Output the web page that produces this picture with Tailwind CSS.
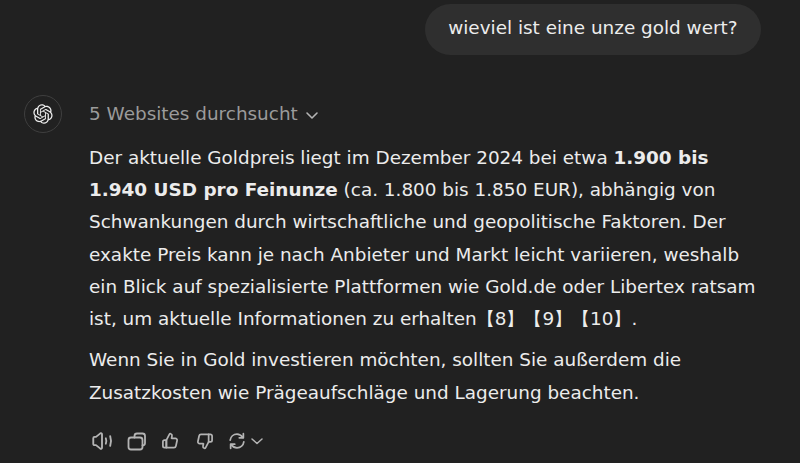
<!DOCTYPE html>
<html lang="de">
<head>
    <meta charset="UTF-8">
    <title>ChatGPT</title>
    <script src="https://cdn.jsdelivr.net/npm/@tailwindcss/browser@4"></script>
</head>
<body class="h-[463px] w-[800px] overflow-hidden bg-[#212121] font-['DejaVu_Sans',sans-serif] text-[18.4px] leading-[32.2px] text-[#ececec]">
    <div class="flex justify-end pt-[4px] pr-[39px]">
        <div class="h-[51px] rounded-[26px] bg-[#2f2f2f] px-[23.5px] py-[8px]">wieviel ist eine unze gold wert?</div>
    </div>
    <div class="mt-[40px] flex pl-[24px]">
        <div class="flex h-[38px] w-[38px] shrink-0 items-center justify-center rounded-full border border-[#3f3f3f]">
            <svg class="h-[20px] w-[20px]" viewBox="0 0 41 41" fill="#ececec"><path d="M37.5324 16.8707C37.9808 15.5241 38.1363 14.0974 37.9886 12.6859C37.8409 11.2744 37.3934 9.91076 36.676 8.68622C35.6126 6.83404 33.9882 5.36761 32.0373 4.4985C30.0864 3.62939 27.9098 3.40259 25.8215 3.85078C24.8796 2.7893 23.7219 1.94125 22.4257 1.36341C21.1295 0.785575 19.7249 0.491269 18.3058 0.500197C16.1708 0.495044 14.0893 1.16803 12.3614 2.42214C10.6335 3.67624 9.34853 5.44666 8.6917 7.47815C7.30085 7.76286 5.98686 8.3414 4.8377 9.17505C3.68854 10.0087 2.73073 11.0782 2.02839 12.312C0.956464 14.1591 0.498905 16.2988 0.721698 18.4228C0.944492 20.5467 1.83612 22.5449 3.268 24.1293C2.81966 25.4759 2.66413 26.9026 2.81182 28.3141C2.95951 29.7256 3.40701 31.0892 4.12437 32.3138C5.18791 34.1659 6.8123 35.6322 8.76321 36.5013C10.7141 37.3704 12.8907 37.5973 14.9789 37.1492C15.9208 38.2107 17.0786 39.0587 18.3747 39.6366C19.6709 40.2144 21.0755 40.5087 22.4946 40.4998C24.6307 40.5054 26.7133 39.8321 28.4418 38.5772C30.1704 37.3223 31.4556 35.5506 32.1119 33.5179C33.5027 33.2332 34.8167 32.6547 35.9659 31.821C37.115 30.9874 38.0728 29.9178 38.7752 28.684C39.8458 26.8371 40.3023 24.6979 40.0789 22.5748C39.8556 20.4517 38.9639 18.4544 37.5324 16.8707ZM22.4978 37.8849C20.7443 37.8874 19.0459 37.2733 17.6994 36.1501C17.7601 36.117 17.8666 36.0586 17.936 36.0161L25.9004 31.4156C26.1003 31.3019 26.2663 31.137 26.3813 30.9378C26.4964 30.7386 26.5563 30.5124 26.5549 30.2825V19.0542L29.9213 20.998C29.9389 21.0068 29.9541 21.0198 29.9656 21.0359C29.977 21.052 29.9842 21.0707 29.9867 21.0902V30.3889C29.9842 32.375 29.1946 34.2791 27.7909 35.6841C26.3872 37.0892 24.4838 37.8806 22.4978 37.8849ZM6.39227 31.0064C5.51397 29.4888 5.19742 27.7107 5.49804 25.9832C5.55718 26.0187 5.66048 26.0818 5.73461 26.1244L13.699 30.7248C13.8975 30.8408 14.1233 30.902 14.3532 30.902C14.583 30.902 14.8088 30.8408 15.0073 30.7248L24.731 25.1103V28.9979C24.7321 29.0177 24.7283 29.0376 24.7199 29.0556C24.7115 29.0736 24.6988 29.0893 24.6829 29.1012L16.6317 33.7497C14.9096 34.7416 12.8643 35.0097 10.9447 34.4954C9.02506 33.9811 7.38785 32.7263 6.39227 31.0064ZM4.29707 13.6194C5.17156 12.0998 6.55279 10.9364 8.19885 10.3327C8.19885 10.4013 8.19491 10.5228 8.19491 10.6071V19.808C8.19351 20.0378 8.25334 20.2638 8.36823 20.4629C8.48312 20.6619 8.64893 20.8267 8.84863 20.9404L18.5723 26.5542L15.206 28.4979C15.1894 28.5089 15.1703 28.5155 15.1505 28.5173C15.1307 28.5191 15.1107 28.516 15.0924 28.5082L7.04046 23.8557C5.32135 22.8601 4.06716 21.2235 3.55289 19.3046C3.03862 17.3858 3.30624 15.3413 4.29707 13.6194ZM31.955 20.0556L22.2312 14.4411L25.5976 12.4981C25.6142 12.4872 25.6333 12.4805 25.6531 12.4787C25.6729 12.4769 25.6928 12.4801 25.7111 12.4879L33.7631 17.1364C34.9967 17.849 36.0017 18.8982 36.6606 20.1613C37.3194 21.4244 37.6047 22.849 37.4832 24.2684C37.3617 25.6878 36.8382 27.0432 35.9743 28.1759C35.1103 29.3086 33.9415 30.1717 32.6047 30.6641C32.6047 30.5947 32.6047 30.4733 32.6047 30.3889V21.188C32.6066 20.9586 32.5474 20.7328 32.4332 20.5338C32.319 20.3348 32.154 20.1698 31.955 20.0556ZM35.3055 15.0128C35.2464 14.9765 35.1431 14.9142 35.069 14.8717L27.1045 10.2712C26.906 10.1554 26.6803 10.0943 26.4504 10.0943C26.2206 10.0943 25.9948 10.1554 25.7963 10.2712L16.0726 15.8858V11.9982C16.0715 11.9783 16.0753 11.9585 16.0837 11.9405C16.0921 11.9225 16.1048 11.9068 16.1207 11.8949L24.1719 7.25025C25.4053 6.53903 26.8158 6.19376 28.2383 6.25482C29.6608 6.31589 31.0364 6.78077 32.2044 7.59508C33.3723 8.40939 34.2842 9.53945 34.8334 10.8531C35.3826 12.1667 35.5464 13.6095 35.3055 15.0128ZM14.2424 21.9419L10.8752 19.9981C10.8576 19.9893 10.8423 19.9763 10.8309 19.9602C10.8195 19.9441 10.8122 19.9254 10.8098 19.9058V10.6071C10.8107 9.18295 11.2173 7.78848 11.9819 6.58696C12.7466 5.38544 13.8377 4.42659 15.1275 3.82264C16.4173 3.21869 17.8524 2.99464 19.2649 3.1767C20.6775 3.35876 22.0089 3.93941 23.1034 4.85067C23.0427 4.88379 22.937 4.94215 22.8668 4.98473L14.9024 9.58517C14.7025 9.69878 14.5366 9.86356 14.4215 10.0626C14.3065 10.2616 14.2466 10.4877 14.2479 10.7175L14.2424 21.9419ZM16.071 17.9991L20.4018 15.4978L24.7325 17.9975V22.9985L20.4018 25.4983L16.071 22.9985V17.9991Z"/></svg>
        </div>
        <div class="ml-[27px] w-[672px]">
            <div class="mt-[3px] flex h-[32px] items-center text-[#9b9b9b]">
                <span>5 Websites durchsucht</span>
                <svg class="ml-[6px] mt-[2px] h-[16px] w-[16px]" viewBox="0 0 16 16" fill="none" stroke="#b4b4b4" stroke-width="1.6" stroke-linecap="round" stroke-linejoin="round"><path d="M3 6l5 5 5-5"/></svg>
            </div>
            <p class="mt-[11.9px]">Der aktuelle Goldpreis liegt im Dezember 2024 bei etwa <strong class="font-bold">1.900 bis 1.940 USD pro Feinunze</strong> (ca. 1.800 bis 1.850 EUR), abhängig von Schwankungen durch wirtschaftliche und geopolitische Faktoren. Der exakte Preis kann je nach Anbieter und Markt leicht variieren, weshalb ein Blick auf spezialisierte Plattformen wie Gold.de oder Libertex ratsam ist, um aktuelle Informationen zu erhalten【8】【9】【10】.</p>
            <p class="mt-[9.2px]">Wenn Sie in Gold investieren möchten, sollten Sie außerdem die Zusatzkosten wie Prägeaufschläge und Lagerung beachten.</p>
            <div class="mt-[20.5px] ml-[0.8px] flex items-center text-[#b4b4b4]">
                <svg class="h-[24px] w-[24px]" viewBox="0 0 22 22" fill="none" stroke="currentColor" stroke-width="1.7" stroke-linecap="round" stroke-linejoin="round"><path d="M3 8.500c0-.8.5-1.300 1.200-1.300h1.300l4-3.200c.7-.5 1.500 0 1.500.8v12.400c0 .8-.8 1.300-1.500.8l-4-3.200H4.200c-.7 0-1.200-.5-1.200-1.300z"/><path d="M14.500 8.500c.6 1.600.6 3.400 0 5"/><path d="M18.500 6.500c1 2.900 1 6.100 0 9"/></svg>
                <svg class="ml-[11.2px] h-[23px] w-[23px]" viewBox="0 0 23 23" fill="none" stroke="currentColor" stroke-width="1.8" stroke-linecap="round" stroke-linejoin="round"><rect x="3.500" y="7.500" width="14" height="12" rx="2.500"/><path d="M9.500 7.500V6c0-1.400 1.100-2.500 2.500-2.500h5.500c1.400 0 2.500 1.100 2.500 2.500v7c0 1.400-.8 2.400-2.500 2.500"/></svg>
                <svg class="ml-[12.500px] h-[20px] w-[20px]" viewBox="0 0 22 22" fill="none" stroke="currentColor" stroke-width="1.9" stroke-linecap="round" stroke-linejoin="round"><path d="M7 10l3.300-6.300c.3-.6.900-.9 1.500-.7 1 .3 1.600 1.300 1.400 2.400L12.700 8h4.100c1.300 0 2.300 1.200 2 2.500l-1.300 6c-.2 1-1.100 1.700-2.100 1.700H7z"/><path d="M7 10H5c-1 0-1.800.8-1.800 1.800v4.600c0 1 .8 1.800 1.800 1.800h2z"/></svg>
                <svg class="ml-[14.500px] h-[20px] w-[20px]" viewBox="0 0 22 22" fill="none" stroke="currentColor" stroke-width="1.9" stroke-linecap="round" stroke-linejoin="round"><path d="M15 12l-3.300 6.300c-.3.600-.9.900-1.500.7-1-.3-1.600-1.300-1.400-2.400L9.300 14H5.200c-1.300 0-2.300-1.200-2-2.500l1.300-6c.2-1 1.100-1.700 2.100-1.700H15z"/><path d="M15 12h2c1 0 1.800-.8 1.800-1.800V5.600c0-1-.8-1.800-1.800-1.800h-2"/></svg>
                <div class="ml-[12.500px] flex items-center">
                    <svg class="h-[20px] w-[20px]" viewBox="0 0 22 22" fill="none" stroke="currentColor" stroke-width="1.9" stroke-linecap="round" stroke-linejoin="round"><path d="M3.500 10c.5-3.700 3.600-6.500 7.500-6.500 2.800 0 4.800 1.400 6.500 3.500"/><path d="M18 3v4.500h-4.500"/><path d="M18.500 12c-.5 3.700-3.600 6.500-7.500 6.500-2.800 0-4.800-1.400-6.500-3.500"/><path d="M4 19v-4.500h4.500"/></svg>
                    <svg class="ml-[3px] h-[14px] w-[14px]" viewBox="0 0 14 14" fill="none" stroke="currentColor" stroke-width="1.500" stroke-linecap="round" stroke-linejoin="round"><path d="M2 5l5 4.500L12 5"/></svg>
                </div>
            </div>
        </div>
    </div>
</body>
</html>
